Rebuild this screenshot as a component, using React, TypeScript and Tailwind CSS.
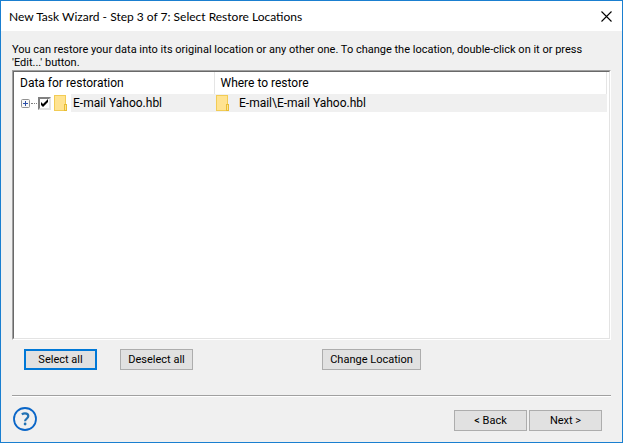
import { useState } from 'react';
import type { ReactNode } from 'react';
import clsx from 'clsx';

interface RestoreItem {
  id: string;
  name: string;
  target: string;
}

const items: RestoreItem[] = [
  { id: 'yahoo', name: 'E-mail Yahoo.hbl', target: 'E-mail\\E-mail Yahoo.hbl' },
];

function FolderIcon() {
  return (
    <svg className="h-4 w-3.5 shrink-0" viewBox="0 0 14 16" aria-hidden="true">
      <rect x="0.5" y="0.5" width="11" height="15" fill="#ffe391" stroke="#f2cc55" />
      <rect x="10.5" y="9.5" width="2" height="6" fill="#ffe391" stroke="#e8bd35" />
    </svg>
  );
}

function HelpIcon() {
  return (
    <svg className="size-6" viewBox="0 0 24 24" fill="none" aria-hidden="true">
      <circle cx="12" cy="12" r="11" stroke="#0a66c8" strokeWidth="1.8" />
      <path d="M8.8 7.4c1-.7 2-1 3.2-1 2 0 3.3 1 3.3 2.7 0 2.6-3.2 2.7-3.2 5.1" stroke="#2272b4" strokeWidth="2.2" />
      <circle cx="12.1" cy="17" r="1.4" fill="#2272b4" />
    </svg>
  );
}

interface WizardButtonProps {
  children: ReactNode;
  focused?: boolean;
  wide?: boolean;
  onClick?: () => void;
}

function WizardButton({ children, focused, wide, onClick }: WizardButtonProps) {
  return (
    <button
      type="button"
      onClick={onClick}
      className={clsx(
        'flex h-[21px] items-center justify-center whitespace-nowrap bg-[#e1e1e1]',
        wide ? 'w-[99px]' : 'w-[73px]',
        focused ? 'border-2 border-[#0078d7]' : 'border border-[#adadad]'
      )}
    >
      {children}
    </button>
  );
}

export default function App() {
  const [selected, setSelected] = useState<string[]>(['yahoo']);

  const toggle = (id: string) => {
    setSelected((prev) => (prev.includes(id) ? prev.filter((x) => x !== id) : [...prev, id]));
  };

  return (
    <div className="flex min-h-screen flex-col border border-[#1a7fd0] bg-[#f0f0f0] font-['Roboto',sans-serif] text-[11px] leading-[13px] text-black">
      <header className="flex h-[30px] items-center justify-between bg-white pl-2 pr-2.5">
        <h1 className="font-['Lato',sans-serif] text-[12px]">
          New Task Wizard - Step 3 of 7: Select Restore Locations
        </h1>
        <button type="button" aria-label="Close">
          <svg className="size-[11px]" viewBox="0 0 11 11" aria-hidden="true">
            <path d="M0.5 0.5l10 10M10.5 0.5l-10 10" stroke="#000" strokeWidth="1.1" />
          </svg>
        </button>
      </header>

      <main className="flex flex-1 flex-col px-[11px] pt-3">
        <p className="mb-px pr-4">
          You can restore your data into its original location or any other one. To change the location, double-click on it or press 'Edit...' button.
        </p>

        <div className="flex flex-1 flex-col border border-b-white border-l-[#a0a0a0] border-r-white border-t-[#a0a0a0]">
          <div className="flex-1 border border-b-[#e3e3e3] border-l-[#696969] border-r-[#e3e3e3] border-t-[#696969] bg-white pr-0.5">
            <table className="w-full table-fixed border-collapse text-[12px]">
              <thead>
                <tr className="h-[22px] text-left">
                  <th className="w-[200px] border-r border-[#e5e5e5] p-0 pl-1.5 font-normal">Data for restoration</th>
                  <th className="border-r border-[#e5e5e5] p-0 pl-1.5 font-normal">Where to restore</th>
                </tr>
              </thead>
              <tbody>
                {items.map((item) => (
                  <tr key={item.id}>
                    <td className="p-0">
                      <div className="flex h-[18px] items-center pl-[7px]">
                        <button type="button" aria-label="Expand" className="shrink-0">
                          <svg className="size-[9px]" viewBox="0 0 9 9" aria-hidden="true">
                            <rect x="0.5" y="0.5" width="8" height="8" rx="1" fill="#f8f8f8" stroke="#919191" />
                            <path d="M2 4.5h5M4.5 2v5" stroke="#2b4fa8" />
                          </svg>
                        </button>
                        <span className="mx-px w-1.5 border-t border-dotted border-[#808080]" />
                        <span className="relative flex shrink-0">
                          <input
                            id={item.id}
                            type="checkbox"
                            checked={selected.includes(item.id)}
                            onChange={() => toggle(item.id)}
                            className="peer size-[13px] appearance-none border-2 border-b-[#e3e3e3] border-l-[#808080] border-r-[#e3e3e3] border-t-[#808080] bg-white"
                          />
                          <svg
                            className="pointer-events-none absolute inset-0 hidden size-[13px] peer-checked:block"
                            viewBox="0 0 13 13"
                            aria-hidden="true"
                          >
                            <path d="M3 5v3l2 2 5-5V2L5 7z" fill="#000" />
                          </svg>
                        </span>
                        <span className="px-[3px]">
                          <FolderIcon />
                        </span>
                        <label htmlFor={item.id} className="flex h-full flex-1 items-center bg-[#f0f0f0] pl-0.5">
                          {item.name}
                        </label>
                      </div>
                    </td>
                    <td className="bg-[#f0f0f0] p-0">
                      <div className="flex h-[18px] items-center gap-[9px] pl-0.5">
                        <FolderIcon />
                        <span>{item.target}</span>
                      </div>
                    </td>
                  </tr>
                ))}
              </tbody>
            </table>
          </div>
        </div>

        <div className="flex items-center pl-3 pt-[9px]">
          <WizardButton focused onClick={() => setSelected(items.map((item) => item.id))}>
            Select all
          </WizardButton>
          <div className="ml-[23px] mr-[129px]">
            <WizardButton onClick={() => setSelected([])}>Deselect all</WizardButton>
          </div>
          <WizardButton wide>Change Location</WizardButton>
        </div>
      </main>

      <footer className="mx-[11px] mt-[25px] border-t border-[#a0a0a0]">
        <div className="flex items-center justify-between border-t border-white pb-[11px] pl-px pr-[9px] pt-2.5">
          <button type="button" aria-label="Help">
            <HelpIcon />
          </button>
          <div className="flex gap-0.5 pt-[3px]">
            <WizardButton>&lt; Back</WizardButton>
            <WizardButton>Next &gt;</WizardButton>
          </div>
        </div>
      </footer>
    </div>
  );
}
